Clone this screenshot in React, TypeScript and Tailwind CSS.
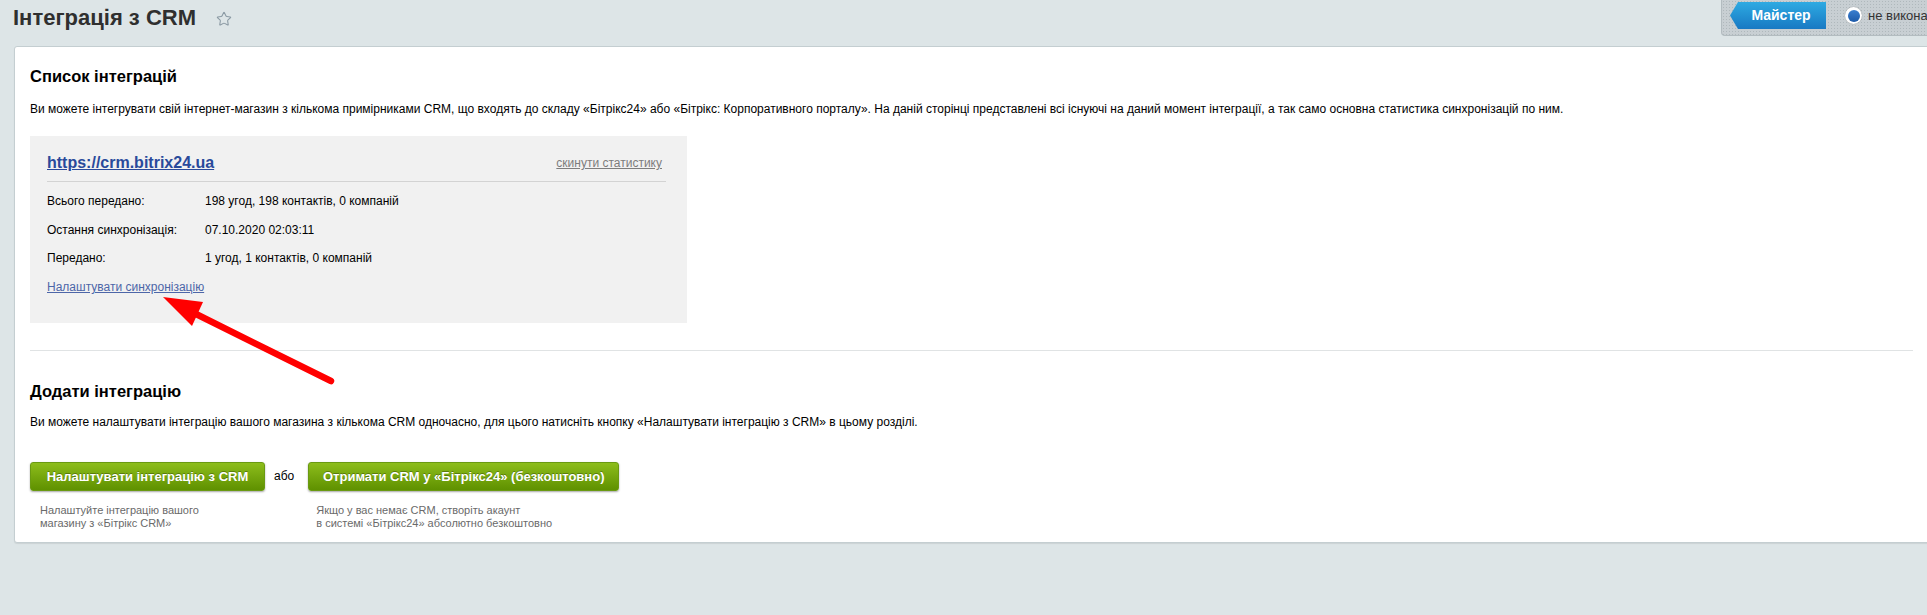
import { Star } from "lucide-react";

const stats = [
  { label: "Всього передано:", value: "198 угод, 198 контактів, 0 компаній" },
  { label: "Остання синхронізація:", value: "07.10.2020 02:03:11" },
  { label: "Передано:", value: "1 угод, 1 контактів, 0 компаній" },
];

const greenBtn =
  "h-[29px] rounded-[3px] border border-[#6a9a12] bg-linear-to-b from-[#8dbd1b] to-[#5f9100] text-[13px] font-bold text-white shadow-[0_1px_2px_rgba(0,0,0,0.35)] [text-shadow:0_-1px_0_rgba(0,0,0,0.3)]";

function MasterBar() {
  return (
    <div className="ml-auto flex h-[36px] w-[206px] items-start overflow-hidden rounded-bl-[4px] border-b border-l border-[#b3bcc0] bg-[#c8cfd3] bg-[radial-gradient(circle,#afb8bc_0.7px,transparent_1px)] bg-[length:3px_3px] pl-[8px] pt-[2px]">
      <div className="flex h-[27px] w-[96px] shrink-0 items-center justify-center bg-linear-to-b from-[#2eaae2] to-[#1979c3] pl-[6px] text-[14px] font-bold text-white [clip-path:polygon(8px_0,100%_0,100%_100%,8px_100%,0_50%)]">
        Майстер
      </div>
      <div className="ml-[19px] mt-[5px] flex h-[17px] w-[17px] shrink-0 items-center justify-center rounded-full bg-white shadow-[0_0_1px_rgba(0,0,0,0.4)]">
        <div className="h-[12px] w-[12px] rounded-full bg-linear-to-b from-[#3a7fd0] to-[#1d5aa8]" />
      </div>
      <span className="ml-[6px] mt-[5px] whitespace-nowrap text-[13px] leading-[17px] text-[#333]">
        не виконано
      </span>
    </div>
  );
}

function Arrow() {
  return (
    <svg
      className="pointer-events-none absolute left-0 top-0"
      width="400"
      height="420"
      viewBox="0 0 400 420"
    >
      <line x1="331" y1="381" x2="196" y2="314" stroke="#f00" strokeWidth="6.5" strokeLinecap="round" />
      <polygon points="163,297 203,302 192,326" fill="#f00" />
    </svg>
  );
}

export default function App() {
  return (
    <div className="relative min-h-[615px] w-[1927px] overflow-hidden bg-[#dde5e7] font-['Liberation_Sans',Arial,sans-serif] text-black">
      {/* Title row */}
      <div className="flex h-[46px] items-start">
        <div className="flex items-center pl-[13px] pt-[4px]">
          <h1 className="text-[22px] font-bold leading-[28px] text-[#2f2f2f]">Інтеграція з CRM</h1>
          <Star className="ml-[20px] mt-[1px] h-[16px] w-[16px] text-[#8b9aa4]" strokeWidth={1.6} />
        </div>
        <MasterBar />
      </div>

      {/* Main panel */}
      <div className="ml-[14px] w-[1940px] rounded-[3px] border border-[#c4ced1] bg-white pb-[12px] pl-[15px] pr-[40px] pt-[19px] shadow-[0_1px_1px_rgba(0,0,0,0.08)]">
        <h2 className="text-[16.5px] font-bold leading-[20px]">Список інтеграцій</h2>
        <p className="mt-[15px] text-[12px] leading-[16px]">
          Ви можете інтегрувати свій інтернет-магазин з кількома примірниками CRM, що входять до складу «Бітрікс24» або
          «Бітрікс: Корпоративного порталу». На даній сторінці представлені всі існуючі на даний момент інтеграції, а так
          само основна статистика синхронізацій по ним.
        </p>

        {/* Integration card */}
        <div className="mt-[19px] w-[657px] bg-[#f1f1f1] pb-[28px] pl-[17px] pr-[21px] pt-[18px]">
          <div className="flex items-center justify-between border-b border-[#d3d3d3] pb-[9px]">
            <a href="#" className="text-[16px] font-bold leading-[18px] text-[#294a9b] underline">
              https://crm.bitrix24.ua
            </a>
            <a href="#" className="mr-[4px] text-[12px] leading-[16px] text-[#7d7d7d] underline">
              скинути статистику
            </a>
          </div>
          <div className="mt-[11px] flex flex-col gap-[12.7px] text-[12px] leading-[16px]">
            {stats.map((s) => (
              <div key={s.label} className="flex">
                <span className="w-[158px]">{s.label}</span>
                <span>{s.value}</span>
              </div>
            ))}
            <a href="#" className="text-[#4d66a8] underline">
              Налаштувати синхронізацію
            </a>
          </div>
        </div>

        <div className="mt-[27px] border-t border-[#e0e3e4]" />

        <h2 className="mt-[30px] text-[16.5px] font-bold leading-[20px]">Додати інтеграцію</h2>
        <p className="mt-[13px] text-[12px] leading-[16px]">
          Ви можете налаштувати інтеграцію вашого магазина з кількома CRM одночасно, для цього натисніть кнопку
          «Налаштувати інтеграцію з CRM» в цьому розділі.
        </p>

        <div className="mt-[32px] flex items-start">
          <div className="flex flex-col">
            <button type="button" className={`${greenBtn} w-[235px]`}>
              Налаштувати інтеграцію з CRM
            </button>
            <p className="mt-[13px] pl-[10px] text-[11px] leading-[13px] text-[#6a6a6a]">
              Налаштуйте інтеграцію вашого
              <br />
              магазину з «Бітрікс CRM»
            </p>
          </div>
          <span className="ml-[9px] mr-[14px] text-[12px] leading-[29px]">або</span>
          <div className="flex flex-col">
            <button type="button" className={`${greenBtn} w-[311px]`}>
              Отримати CRM у «Бітрікс24» (безкоштовно)
            </button>
            <p className="mt-[13px] pl-[8px] text-[11px] leading-[13px] text-[#6a6a6a]">
              Якщо у вас немає CRM, створіть акаунт
              <br />
              в системі «Бітрікс24» абсолютно безкоштовно
            </p>
          </div>
        </div>
      </div>

      <Arrow />
    </div>
  );
}
